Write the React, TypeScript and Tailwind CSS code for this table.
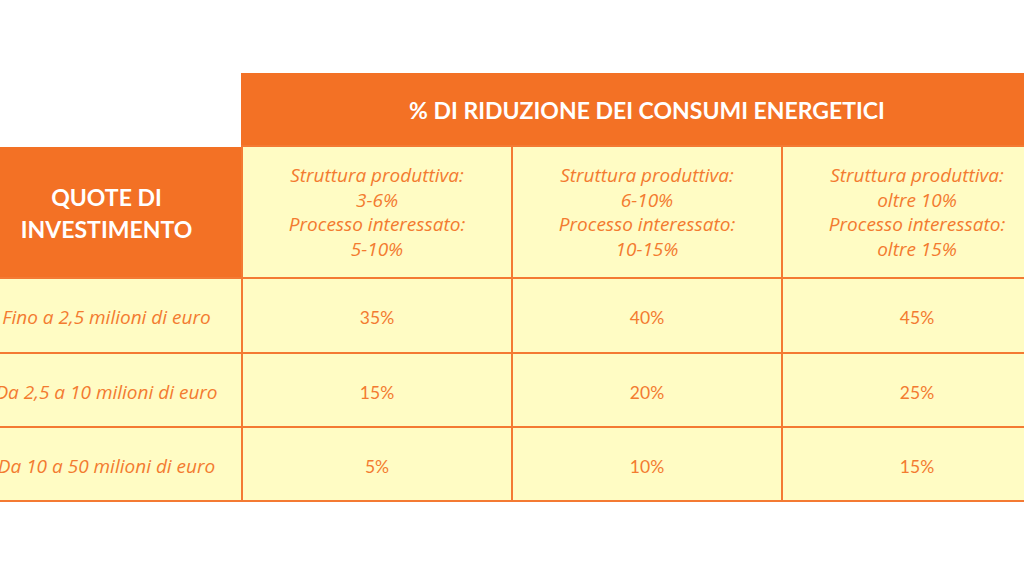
import React from "react";

const B = "border-[#f47a33]";
const IT = { fontFamily: "'Open Sans', Lato, sans-serif" };

export default function App() {
  const headers = [
    ["Struttura produttiva:", "3-6%", "Processo interessato:", "5-10%"],
    ["Struttura produttiva:", "6-10%", "Processo interessato:", "10-15%"],
    ["Struttura produttiva:", "oltre 10%", "Processo interessato:", "oltre 15%"],
  ];
  const rows: [string, string[]][] = [
    ["Fino a 2,5 milioni di euro", ["35%", "40%", "45%"]],
    ["Da 2,5 a 10 milioni di euro", ["15%", "20%", "25%"]],
    ["Da 10 a 50 milioni di euro", ["5%", "10%", "15%"]],
  ];
  return (
    <div
      className="w-[1024px] h-[575px] bg-white overflow-hidden"
      style={{ fontFamily: "Lato, 'Open Sans', sans-serif" }}
    >
      <div className="pt-[73px] -ml-[28px] w-[1081px]">
        <div className="grid grid-cols-[271px_270px_270px_270px] grid-rows-[74px_132px_75px_74px_74px]">
          <div className="bg-white" />
          <div className={`col-span-3 -ml-[2px] bg-[#f37125] border-b-2 ${B} flex items-center justify-center`}>
            <span className="text-white font-bold text-[23px] tracking-[0px] pt-[2px]">
              % DI RIDUZIONE DEI CONSUMI ENERGETICI
            </span>
          </div>

          <div className={`bg-[#f37125] border-b-2 border-r-2 ${B} flex items-center justify-center`}>
            <span className="text-white font-bold text-[23px] leading-[32px] text-center tracking-[0px] pt-[2px]">
              QUOTE DI
              <br />
              INVESTIMENTO
            </span>
          </div>
          {headers.map((h, i) => (
            <div
              key={i}
              className={`bg-[#fffcc4] border-b-2 border-r-2 ${B} flex items-center justify-center`}
            >
              <div
                className="text-[#f37b30] italic text-[19px] leading-[24.5px] text-center"
                style={IT}
              >
                {h.map((l, j) => (
                  <div key={j}>{l}</div>
                ))}
              </div>
            </div>
          ))}

          {rows.map(([label, vals], r) => (
            <React.Fragment key={r}>
              <div
                className={`bg-[#fffcc4] border-b-2 border-r-2 ${B} flex items-center justify-center`}
              >
                <span className="text-[#f37b30] italic text-[19px] pt-[4px]" style={IT}>
                  {label}
                </span>
              </div>
              {vals.map((v, c) => (
                <div
                  key={c}
                  className={`bg-[#fffcc4] border-b-2 border-r-2 ${B} flex items-center justify-center`}
                >
                  <span className="text-[#f37b30] text-[17.5px] pt-[6px]">{v}</span>
                </div>
              ))}
            </React.Fragment>
          ))}
        </div>
      </div>
    </div>
  );
}
